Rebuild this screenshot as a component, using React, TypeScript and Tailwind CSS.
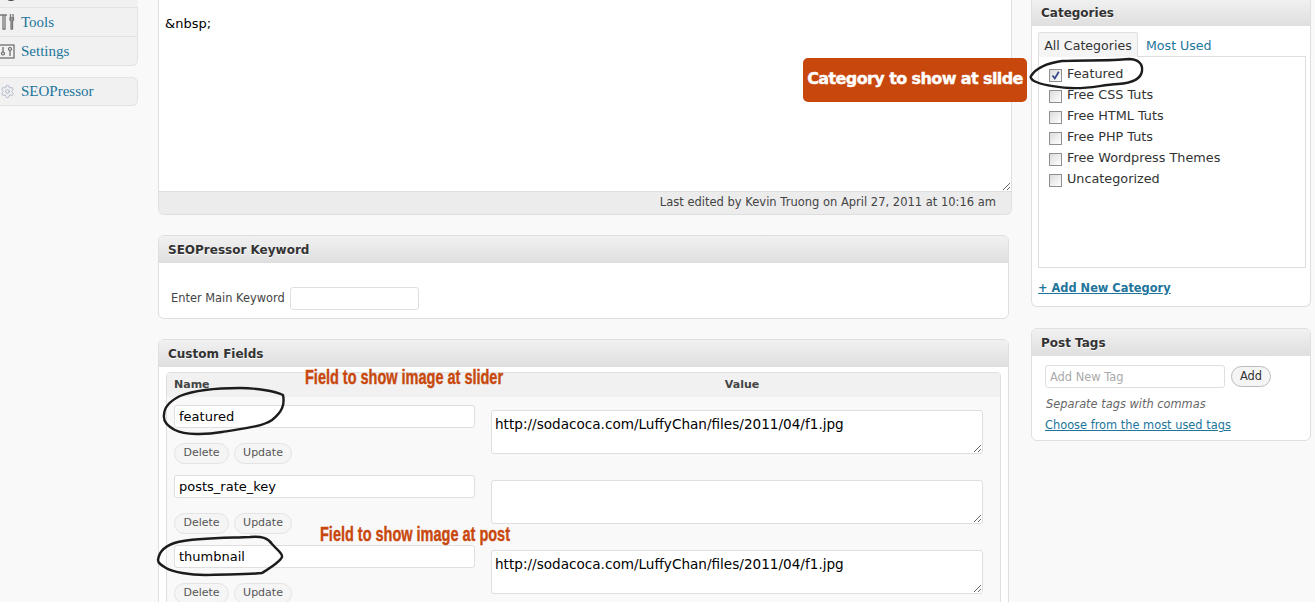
import { Settings as Gear } from "lucide-react";

const categories = [
  { label: "Featured", checked: true },
  { label: "Free CSS Tuts" },
  { label: "Free HTML Tuts" },
  { label: "Free PHP Tuts" },
  { label: "Free Wordpress Themes" },
  { label: "Uncategorized" },
];

const fields = [
  { name: "featured", value: "http://sodacoca.com/LuffyChan/files/2011/04/f1.jpg" },
  { name: "posts_rate_key", value: "" },
  { name: "thumbnail", value: "http://sodacoca.com/LuffyChan/files/2011/04/f1.jpg" },
];

function BoxHeader({ title }: { title: string }) {
  return (
    <div className="flex h-[27px] items-center bg-gradient-to-b from-[#f1f1f1] to-[#dfdfdf] px-[9px] text-[12px] font-bold text-[#333] [text-shadow:0_1px_0_#fff]">
      {title}
    </div>
  );
}

function PillButton({ label, w }: { label: string; w: string }) {
  return (
    <span className={`flex h-[21px] items-center justify-center rounded-full border border-[#e3e3e3] bg-[#f5f5f5] text-[11px] text-[#555] ${w}`}>
      {label}
    </span>
  );
}

function FieldRow({ name, value }: { name: string; value: string }) {
  return (
    <div className="flex h-[70px] pl-[7px]">
      <div className="w-[301px] pt-[8px]">
        <input
          readOnly
          defaultValue={name}
          className="block h-[23px] w-[301px] rounded-[3px] border border-[#dfdfdf] bg-white px-[4px] text-[13px] text-black outline-none"
        />
        <div className="mt-[15px] flex gap-[5px]">
          <PillButton label="Delete" w="w-[55px]" />
          <PillButton label="Update" w="w-[58px]" />
        </div>
      </div>
      <textarea
        readOnly
        defaultValue={value}
        className="mt-[13px] ml-[16px] h-[44px] w-[492px] rounded-[3px] border border-[#dfdfdf] bg-white px-[3px] py-[3px] text-[13.6px] text-black outline-none"
      />
    </div>
  );
}

function Checkbox({ checked }: { checked?: boolean }) {
  return (
    <span className="flex h-[13px] w-[13px] shrink-0 items-center justify-center border border-[#8e8f8f] bg-gradient-to-br from-[#dcdcdc] to-white">
      {checked && (
        <svg viewBox="0 0 11 11" className="h-[11px] w-[11px]">
          <path d="M2.5 5.5 L4.8 8.5 L8.8 1.8" fill="none" stroke="#3c4a8c" strokeWidth="1.8" />
        </svg>
      )}
    </span>
  );
}

function Ink({ className, d, box }: { className: string; d: string; box: string }) {
  return (
    <svg viewBox={box} className={`pointer-events-none absolute ${className}`} fill="none">
      <path d={d} stroke="#1c1c1c" strokeWidth="2.4" strokeLinecap="round" strokeLinejoin="round" />
    </svg>
  );
}

function MenuRow({ label, icon }: { label: string; icon: React.ReactNode }) {
  return (
    <div className="flex h-[29px] items-center border-t border-[#e3e3e3]">
      <span className="flex w-[21px] justify-start">{icon}</span>
      <span className="text-[15px] text-[#21759b] [font-family:'Liberation_Serif',serif]">{label}</span>
    </div>
  );
}

export default function App() {
  return (
    <div className="relative flex h-[602px] w-[1315px] overflow-hidden bg-[#f9f9f9] text-[11.4px] text-[#333] [font-family:'DejaVu_Sans',Verdana,sans-serif]">
      {/* admin menu */}
      <aside className="mr-[20px] w-[138px] shrink-0">
        <div className="h-[7px] overflow-hidden bg-[#f1f1f1]">
          <div className="ml-[4px] -mt-[14px] h-[15px] w-[14px] rounded-full bg-[#444]" />
        </div>
        <div className="rounded-br-[6px] border-r border-b border-[#e3e3e3] bg-[#f1f1f1]">
          <MenuRow
            label="Tools"
            icon={
              <svg viewBox="0 0 15 18" className="h-[18px] w-[15px]" fill="none" stroke="#777" strokeWidth="1.3">
                <path d="M0 2h7M3 2v14h2V2" />
                <path d="M10.5 1v4M13 1v4M10 5h3.5v2h-1v9a1.2 1.2 0 0 1-1.5 0V7h-1z" />
              </svg>
            }
          />
          <MenuRow
            label="Settings"
            icon={
              <svg viewBox="0 0 15 15" className="h-[15px] w-[15px]" fill="none" stroke="#666" strokeWidth="1.2">
                <rect x="-2" y="1" width="16" height="13" />
                <circle cx="3" cy="9.5" r="1.5" />
                <path d="M3 3v5" />
                <circle cx="10" cy="5" r="1.5" />
                <path d="M10 7v5" />
              </svg>
            }
          />
        </div>
        <div className="mt-[11px] flex h-[29px] items-center rounded-r-[6px] border border-l-0 border-[#e3e3e3] bg-[#f1f1f1]">
          <span className="flex w-[21px]">
            <Gear size={15} strokeWidth={1.2} className="text-[#9aa5c0]" />
          </span>
          <span className="text-[15px] text-[#21759b] [font-family:'Liberation_Serif',serif]">SEOPressor</span>
        </div>
      </aside>

      {/* editor column */}
      <main className="w-[854px] shrink-0">
        <section className="h-[215px] overflow-hidden rounded-b-[6px] border border-t-0 border-[#dfdfdf]">
          <textarea
            readOnly
            defaultValue="&amp;nbsp;"
            className="block h-[191px] w-full bg-white px-[6px] pt-[14px] text-[13px] leading-[19px] text-black outline-none"
          />
          <div className="flex h-[23px] items-center justify-end border-t border-[#dfdfdf] bg-[#ececec] pr-[15px] text-[11.5px] text-[#444]">
            Last edited by Kevin Truong on April 27, 2011 at 10:16 am
          </div>
        </section>

        <section className="mt-[20px] h-[84px] w-[851px] overflow-hidden rounded-[6px] border border-[#dfdfdf] bg-white">
          <BoxHeader title="SEOPressor Keyword" />
          <div className="flex items-center pt-[24px] pl-[12px] text-[#444]">
            <span>Enter Main Keyword</span>
            <input className="ml-[5px] h-[23px] w-[129px] rounded-[3px] border border-[#dfdfdf] bg-white outline-none" />
          </div>
        </section>

        <section className="mt-[20px] w-[851px] rounded-t-[6px] border border-[#dfdfdf] bg-white">
          <BoxHeader title="Custom Fields" />
          <div className="mx-[7px] mt-[5px] rounded-t-[4px] border border-[#dfdfdf] bg-[#f9f9f9]">
            <div className="flex h-[24px] items-center bg-[#f1f1f1] text-[11px] font-bold text-[#444]">
              <span className="w-[324px] pl-[7px]">Name</span>
              <span className="w-[502px] text-center">Value</span>
            </div>
            <div>
              {fields.map((f) => (
                <FieldRow key={f.name} name={f.name} value={f.value} />
              ))}
            </div>
          </div>
        </section>
      </main>

      {/* side column */}
      <div className="ml-[19px] w-[280px] shrink-0">
        <section className="-mt-px h-[308px] overflow-hidden rounded-b-[6px] border border-t-0 border-[#dfdfdf] bg-white">
          <BoxHeader title="Categories" />
          <div className="flex pl-[6px] pt-[6px] text-[12.6px]">
            <span className="z-10 -mb-px flex h-[25px] w-[100px] items-center justify-center rounded-t-[3px] border border-b-0 border-[#dfdfdf] bg-[#f5f5f5] pt-[2px] text-[#333]">
              All Categories
            </span>
            <span className="ml-[8px] flex h-[24px] items-center pt-[4px] text-[#21759b]">Most Used</span>
          </div>
          <div className="ml-[6px] h-[212px] w-[268px] border border-[#dfdfdf] pl-[10px] pt-[7px] text-[12.8px]">
            {categories.map((c) => (
              <div key={c.label} className="flex h-[21px] items-center gap-[5px] text-[#333]">
                <span className="mt-[2px]">
                  <Checkbox checked={c.checked} />
                </span>
                <span className="-mt-[2px]">{c.label}</span>
              </div>
            ))}
          </div>
          <div className="mt-[12px] ml-[6px] font-bold text-[#21759b] underline">+ Add New Category</div>
        </section>

        <section className="mt-[21px] h-[113px] overflow-hidden rounded-[6px] border border-[#dfdfdf] bg-white">
          <BoxHeader title="Post Tags" />
          <div className="flex items-center pt-[9px] pl-[13px]">
            <input
              placeholder="Add New Tag"
              className="h-[23px] w-[180px] rounded-[3px] border border-[#dfdfdf] px-[4px] text-[11.4px] outline-none placeholder:text-[#aaa]"
            />
            <span className="ml-[6px] flex h-[21px] w-[40px] items-center justify-center rounded-full border border-[#bbb] bg-[#f5f5f5] text-[#333]">
              Add
            </span>
          </div>
          <div className="mt-[8px] pl-[14px] italic text-[#666]">Separate tags with commas</div>
          <div className="mt-[4px] pl-[13px] text-[#21759b] underline">Choose from the most used tags</div>
        </section>
      </div>

      {/* screenshot annotations */}
      <div className="absolute left-[803px] top-[58px] flex h-[44px] w-[224px] items-center justify-center rounded-[5px] bg-[#c8470c] pb-[2px] text-[16px] font-bold tracking-[-0.6px] text-white [font-family:'DejaVu_Sans',sans-serif] [-webkit-text-stroke:0.4px_white]">
        Category to show at slide
      </div>
      <div className="absolute left-[305px] top-[361px] w-[200px] origin-left scale-x-[0.69] whitespace-nowrap text-[21px] font-bold text-[#c8470c] [font-family:'Liberation_Sans',sans-serif] [-webkit-text-stroke:0.4px_#c8470c]">
        Field to show image at slider
      </div>
      <div className="absolute left-[320px] top-[518px] w-[200px] origin-left scale-x-[0.69] whitespace-nowrap text-[21px] font-bold text-[#c8470c] [font-family:'Liberation_Sans',sans-serif] [-webkit-text-stroke:0.4px_#c8470c]">
        Field to show image at post
      </div>
      <Ink
        className="left-[1025px] top-[55px] h-[38px] w-[122px]"
        box="1025 55 122 38"
        d="M1031 76 C1036 68 1048 63 1062 61 C1085 60 1110 61 1129 59 C1138 59 1143 64 1142 71 C1141 79 1132 83 1118 84 C1100 85 1090 89 1070 88 C1055 87 1040 84 1034 81 C1031 79 1030 77 1031 76 Z"
      />
      <Ink
        className="left-[160px] top-[386px] h-[50px] w-[126px]"
        box="160 386 126 50"
        d="M164 415 C164 407 170 401 180 396 C195 390 215 388 240 388 C255 388 275 391 283 395 C285 405 282 412 272 420 C262 427 240 429 222 432 C205 435 185 435 175 430 C168 426 163 422 164 415 Z"
      />
      <Ink
        className="left-[155px] top-[534px] h-[44px] w-[130px]"
        box="155 534 130 44"
        d="M158 560 C159 551 166 545 178 542 C195 538 225 538 250 537 C262 536 268 538 272 544 C277 550 283 553 282 557 C280 562 270 568 262 573 C245 575 225 574 205 575 C190 575 172 572 166 568 C161 565 158 563 158 560 Z"
      />
    </div>
  );
}
